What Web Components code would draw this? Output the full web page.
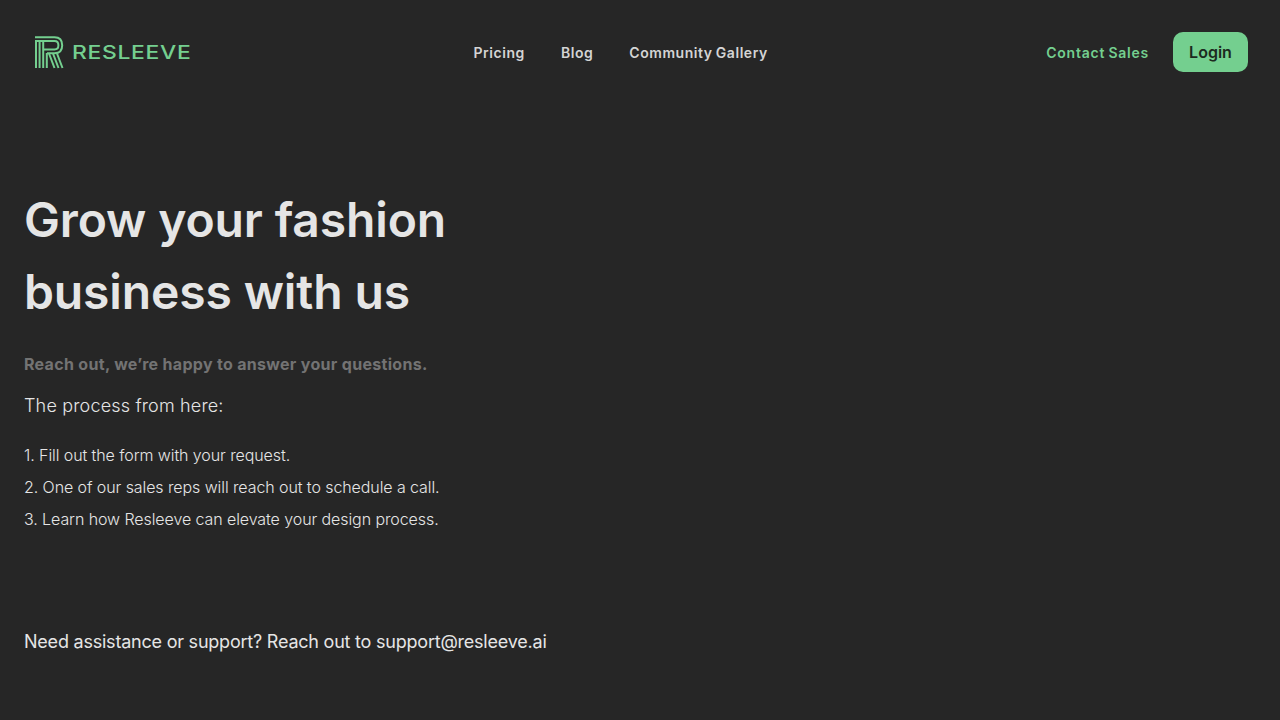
<!DOCTYPE html>
<html><head><meta charset="utf-8"><style>
html,body{margin:0;background:#262626;font-family:Inter,"Liberation Sans",sans-serif}
body{height:720px;overflow:hidden}
</style></head><body>
<site-header></site-header>
<contact-hero></contact-hero>
<script>
class Logo extends HTMLElement{constructor(){super();this.attachShadow({mode:'open'}).innerHTML=`<style>:host{display:block;width:160px;height:34px}svg{display:block}</style>
<svg width="160" height="34" viewBox="0 0 160 34" fill="none" stroke="#74cf8f">
<g stroke-width="2">
<path d="M0 2.2H19.5Q27.2 2.2 27.2 10.2Q27.2 18.2 19.5 18.2H12"/>
<path d="M0 6H19.5Q23.4 6 23.4 10.2Q23.4 14.4 19.5 14.4H9"/>
<path d="M1 6V33M4.6 6V33M8.2 6V33M11.8 18V33"/>
<path d="M14 18.5L19.5 33M18 18.5L23.5 33M22 18.5L27.5 33"/>
</g>
<text x="37" y="24" fill="#74cf8f" stroke="none" font-family="Inter,'Liberation Sans',sans-serif" font-size="19" font-weight="500" textLength="119.5" lengthAdjust="spacingAndGlyphs">RESLEEVE</text>
</svg>`}}
customElements.define('brand-logo',Logo);
class Header extends HTMLElement{constructor(){super();this.attachShadow({mode:'open'}).innerHTML=`<style>
:host{display:flex;justify-content:space-between;align-items:center;height:104px;padding:0 32px 0 35px;box-sizing:border-box;font-size:14px;font-weight:600;letter-spacing:.56px;word-spacing:-1px}
nav{display:flex;gap:36px;color:#d4d4d4}
.r{display:flex;align-items:center;gap:24px}
.c{color:#74cf8f;letter-spacing:.76px}
button{font:600 16px Inter,sans-serif;letter-spacing:0;word-spacing:0;background:#74cf8f;color:#1c2a20;border:0;border-radius:10px;width:75px;height:40px;padding:0}
</style><brand-logo></brand-logo><nav><span>Pricing</span><span>Blog</span><span>Community Gallery</span></nav><div class="r"><span class="c">Contact Sales</span><button>Login</button></div>`}}
customElements.define('site-header',Header);
class Hero extends HTMLElement{constructor(){super();this.attachShadow({mode:'open'}).innerHTML=`<style>
:host{display:block;padding:80px 24px 0;color:#e5e5e5}
h1{margin:0;font-size:48px;line-height:72px;font-weight:600;letter-spacing:-.13px}
.s{margin:24px 0 0;font-size:16px;line-height:24px;font-weight:700;letter-spacing:.31px;color:#737373}
.p{margin:16px 0 0;font-size:18px;line-height:28px;font-weight:300;letter-spacing:.17px}
ol{list-style:none;margin:19px 0 0;padding:0;font-size:16px;line-height:32px;font-weight:300;letter-spacing:-.085px}
.n{margin:93px 0 0;font-size:18px;line-height:28px;font-weight:400;letter-spacing:-.22px}
</style><h1>Grow your fashion<br>business with us</h1><p class="s">Reach out, we’re happy to answer your questions.</p><p class="p">The process from here:</p><ol><li>1. Fill out the form with your request.</li><li>2. One of our sales reps will reach out to schedule a call.</li><li>3. Learn how Resleeve can elevate your design process.</li></ol><p class="n">Need assistance or support? Reach out to support@resleeve.ai</p>`}}
customElements.define('contact-hero',Hero);
</script></body></html>
